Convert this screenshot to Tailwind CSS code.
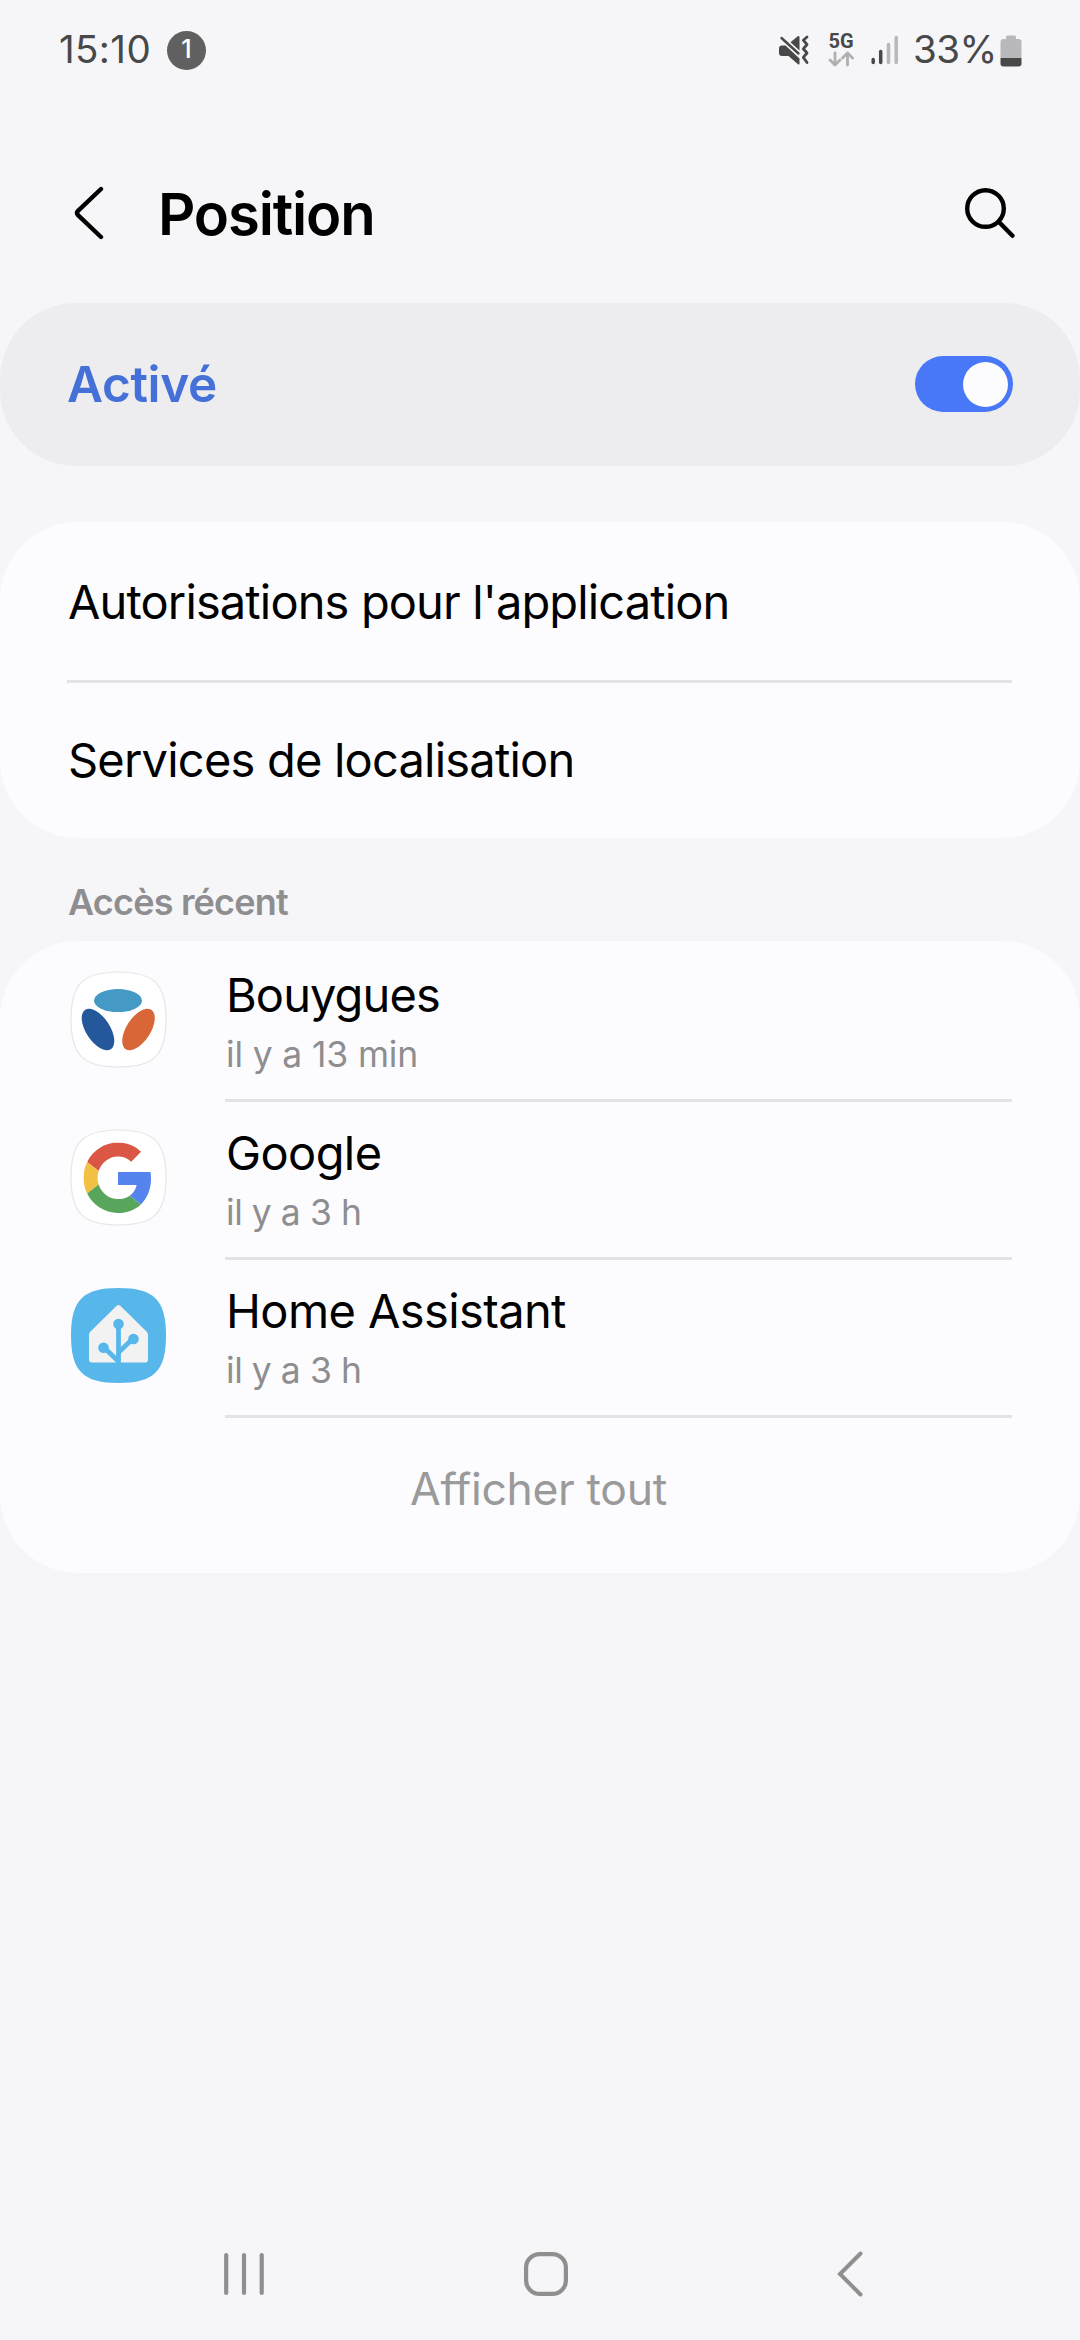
<!DOCTYPE html>
<html lang="fr">
<head>
<meta charset="utf-8">
<title>Position</title>
<script src="https://cdn.jsdelivr.net/npm/@tailwindcss/browser@4"></script>
</head>
<body class="bg-[#f6f6f8]">
<div class="flex h-[2340px] w-[1080px] flex-col overflow-hidden bg-[#f6f6f8] font-['Inter',sans-serif] whitespace-nowrap text-black">

  <!-- Status bar -->
  <header class="flex h-[100px] shrink-0 items-center justify-between pl-[59px] pr-[58px] text-[#484848]">
    <div class="flex items-center">
      <span class="w-[108px] text-[38.5px] tracking-[0.4px]">15:10</span>
      <span class="flex size-[39px] items-center justify-center rounded-full bg-[#606060] text-[25px] font-medium text-white">1</span>
    </div>
    <div class="flex items-center">
      <!-- Muted with vibration -->
      <svg class="mr-[18px] h-[32px] w-[32px]" viewBox="0 0 32 32" fill="#484848">
        <path d="M4 11.500H7.500L21.500 24.500V30Q21 30.800 20 30.200L10.500 22H4Q1 22 1 19V14.500Q1 11.500 4 11.500Z"/>
        <path d="M12.500 8.200L19.500 2.400Q21.500 1.200 21.500 3.200V16.500Z"/>
        <path d="M3.500 4L20.500 19.500" fill="none" stroke="#484848" stroke-width="2.400" stroke-linecap="round"/>
        <path d="M29 3L25.300 6.200L29 10.500L25.300 14.800L29 19L25.300 23.400L29 28.500" fill="none" stroke="#484848" stroke-width="2.800" stroke-linecap="round" stroke-linejoin="round"/>
      </svg>
      <!-- 5G -->
      <div class="mr-[17px] flex w-[26px] flex-col items-center">
        <span class="h-[16px] font-['Roboto',sans-serif] text-[20px] leading-[16px] font-bold">5G</span>
        <svg class="mt-[2px] h-[16px] w-[26px]" viewBox="0 0 26 16" fill="none" stroke="#b0b0b1" stroke-width="2.800" stroke-linecap="round" stroke-linejoin="round">
          <path d="M7 2V14M2 9L7 14L12 9"/><path d="M19.500 14V2M14.500 7L19.500 2L24.500 7"/>
        </svg>
      </div>
      <!-- Signal -->
      <svg class="mr-[14px] h-[30px] w-[28px]" viewBox="0 0 28 30" stroke-width="3.500" stroke-linecap="round" fill="none">
        <path d="M2.200 24.500V27.500M9.700 16.500V27.500" stroke="#484848"/>
        <path d="M17.500 9.500V27.500M25.200 2.500V27.500" stroke="#b8b8ba"/>
      </svg>
      <span class="w-[86px] text-[38.5px] tracking-[-0.5px]">33%</span>
      <!-- Battery -->
      <svg class="mt-[1px] ml-[1px] h-[32px] w-[22px]" viewBox="0 0 22 32">
        <path d="M6 4V2Q6 .500 7.500 .500H14.500Q16 .500 16 2V4H18.500Q21.500 4 21.500 7V23H.500V7Q.500 4 3.500 4Z" fill="#b9b9bb"/>
        <path d="M.500 23H21.500V28.500Q21.500 31.500 18.500 31.500H3.500Q.500 31.500 .500 28.500Z" fill="#484848"/>
      </svg>
    </div>
  </header>

  <!-- Title bar -->
  <div class="flex h-[203px] shrink-0 items-center justify-between pt-[25px] pr-[64px] pl-[72px]">
    <div class="flex items-center">
      <svg class="mr-[2px] mb-[2px] h-[54px] w-[84px]" viewBox="0 0 84 54" fill="none" stroke="#000" stroke-width="4.400" stroke-linecap="round" stroke-linejoin="round"><path d="M29 3L6 24.800Q4 27 6 29.200L29 51"/></svg>
      <h1 class="text-[58px] font-semibold tracking-[-1.15px]">Position</h1>
    </div>
    <svg class="mb-[2px] h-[52px] w-[52px]" viewBox="0 0 52 52" fill="none" stroke="#000" stroke-width="4.400" stroke-linecap="round"><circle cx="21.500" cy="21.500" r="18.300"/><path d="M35.200 35.200L48.500 48.800"/></svg>
  </div>

  <!-- Master switch -->
  <section class="flex h-[163px] shrink-0 items-center justify-between rounded-[76px] bg-[#ededef] pr-[67px] pl-[67px]">
    <span class="text-[49.5px] font-semibold tracking-[-0.35px] text-[#4570d8]">Activé</span>
    <span class="mb-px flex h-[56px] w-[98px] items-center justify-end rounded-full bg-[#4878f8] pr-[5.500px]"><span class="size-[45px] rounded-full bg-[#fcfcff]"></span></span>
  </section>

  <!-- Settings links -->
  <section class="mt-[56px] flex h-[316px] shrink-0 flex-col rounded-[78px] bg-[#fcfcff] pr-[68px] pl-[67px] text-[47px]">
    <div class="flex h-[161px] items-center border-b-[3px] border-[#e3e3e5] pt-[2px] pl-px tracking-[-0.87px]">Autorisations pour l'application</div>
    <div class="flex h-[155px] items-center pl-px tracking-[-0.79px]">Services de localisation</div>
  </section>

  <h2 class="flex h-[103px] shrink-0 items-center pt-[25px] pl-[68px] text-[36px] font-semibold tracking-[-0.8px] text-[#8e8e91]">Accès récent</h2>

  <!-- Recent access -->
  <section class="flex h-[632px] shrink-0 flex-col rounded-[78px] bg-[#fcfcff] pt-[3px] pr-[68px] pl-[70px]">
    <div class="flex h-[158px]">
      <svg class="mt-[27px] h-[97px] w-[97px]" viewBox="0 0 97 97">
        <path d="M48.500 1C84 1 96 13 96 48.500S84 96 48.500 96S1 84 1 48.500S13 1 48.500 1Z" fill="#fff" stroke="#e6e6e8" stroke-width="1.200"/>
        <ellipse cx="48" cy="29.600" rx="24" ry="11.500" fill="#4499c5"/>
        <ellipse cx="28" cy="58.500" rx="23.500" ry="12" transform="rotate(57 28 58.500)" fill="#24589b"/>
        <ellipse cx="68.500" cy="58.500" rx="23.500" ry="12" transform="rotate(-57 68.500 58.500)" fill="#d86637"/>
      </svg>
      <div class="ml-[58px] flex-1 border-b-[3px] border-[#e3e3e5] pt-[21px] pl-px">
        <div class="text-[47px] leading-[60px] tracking-[-0.9px]">Bouygues</div>
        <div class="text-[35.5px] leading-[60px] tracking-[-0.15px] text-[#8e8e91]">il y a 13 min</div>
      </div>
    </div>
    <div class="flex h-[158px]">
      <svg class="mt-[27px] h-[97px] w-[97px]" viewBox="0 0 97 97">
        <path d="M48.500 1C84 1 96 13 96 48.500S84 96 48.500 96S1 84 1 48.500S13 1 48.500 1Z" fill="#fff" stroke="#e6e6e8" stroke-width="1.200"/>
        <svg x="13.500" y="13.500" width="69" height="70.500" viewBox="0 0 48 48" preserveAspectRatio="none">
          <path fill="#da5746" d="M24 9.500c3.540 0 6.710 1.220 9.210 3.600l6.850-6.850C35.900 2.380 30.470 0 24 0 14.620 0 6.510 5.380 2.560 13.220l7.980 6.190C12.430 13.720 17.740 9.500 24 9.500z"/>
          <path fill="#5684ee" d="M46.980 24.550c0-1.570-.15-3.090-.38-4.550H24v9.020h12.940c-.58 2.960-2.260 5.480-4.780 7.180l7.730 6c4.510-4.180 7.090-10.360 7.090-17.650z"/>
          <path fill="#f2c043" d="M10.530 28.590c-.48-1.450-.76-2.990-.76-4.590s.27-3.140.76-4.590l-7.980-6.190C.92 16.460 0 20.120 0 24c0 3.880.92 7.540 2.560 10.780l7.970-6.190z"/>
          <path fill="#58a55c" d="M24 48c6.480 0 11.930-2.130 15.890-5.810l-7.730-6c-2.150 1.450-4.920 2.300-8.160 2.300-6.260 0-11.570-4.220-13.470-9.910l-7.980 6.190C6.510 42.620 14.620 48 24 48z"/>
        </svg>
      </svg>
      <div class="ml-[58px] flex-1 border-b-[3px] border-[#e3e3e5] pt-[21px] pl-px">
        <div class="text-[47px] leading-[60px] tracking-[-0.6px]">Google</div>
        <div class="text-[35.5px] leading-[60px] tracking-[-0.45px] text-[#8e8e91]">il y a 3 h</div>
      </div>
    </div>
    <div class="flex h-[158px]">
      <svg class="mt-[27px] h-[97px] w-[97px]" viewBox="0 0 97 97">
        <path d="M48.500 1C84 1 96 13 96 48.500S84 96 48.500 96S1 84 1 48.500S13 1 48.500 1Z" fill="#58b7ea"/>
        <path d="M46.700 18.800Q48.500 17 50.300 18.800L76.500 44.500Q78 46 78 48V72.500Q78 75.500 75 75.500H22Q19 75.500 19 72.500V48Q19 46 20.500 44.500Z" fill="#f2f2f3"/>
        <path d="M48.500 38V76M48.500 65.500L63 51.500M48.500 74.500L33.500 60" fill="none" stroke="#58b7ea" stroke-width="4.800"/>
        <g fill="#58b7ea"><circle cx="48.500" cy="37" r="5.300"/><circle cx="63.500" cy="52" r="5.300"/><circle cx="33.500" cy="60.800" r="5.300"/></g>
      </svg>
      <div class="ml-[58px] flex-1 border-b-[3px] border-[#e3e3e5] pt-[21px] pl-px">
        <div class="text-[47px] leading-[60px] tracking-[-0.6px]">Home Assistant</div>
        <div class="text-[35.5px] leading-[60px] tracking-[-0.45px] text-[#8e8e91]">il y a 3 h</div>
      </div>
    </div>
    <div class="flex flex-1 items-center justify-center pr-[5px] pb-[13px] text-[44.5px] tracking-[-0.35px] text-[#9a9a9b]">Afficher tout</div>
  </section>

  <!-- Navigation bar -->
  <nav class="mt-auto flex h-[132px] shrink-0 items-center pl-[223px]">
    <svg class="h-[46px] w-[42px]" viewBox="0 0 42 46" fill="none" stroke="#8f8f90" stroke-width="4.200" stroke-linecap="round"><path d="M3.200 4V42M21 4V42M38.700 4V42"/></svg>
    <svg class="ml-[258px] h-[46px] w-[46px]" viewBox="0 0 46 46" fill="none" stroke="#8f8f90" stroke-width="4.200"><rect x="3.100" y="3.100" width="39.800" height="39.800" rx="13.500"/></svg>
    <svg class="ml-[267px] h-[46px] w-[27px]" viewBox="0 0 27 46" fill="none" stroke="#8f8f90" stroke-width="4" stroke-linecap="round" stroke-linejoin="miter"><path d="M24.500 2.500L4 23L24.500 43.500"/></svg>
  </nav>
</div>
</body>
</html>
